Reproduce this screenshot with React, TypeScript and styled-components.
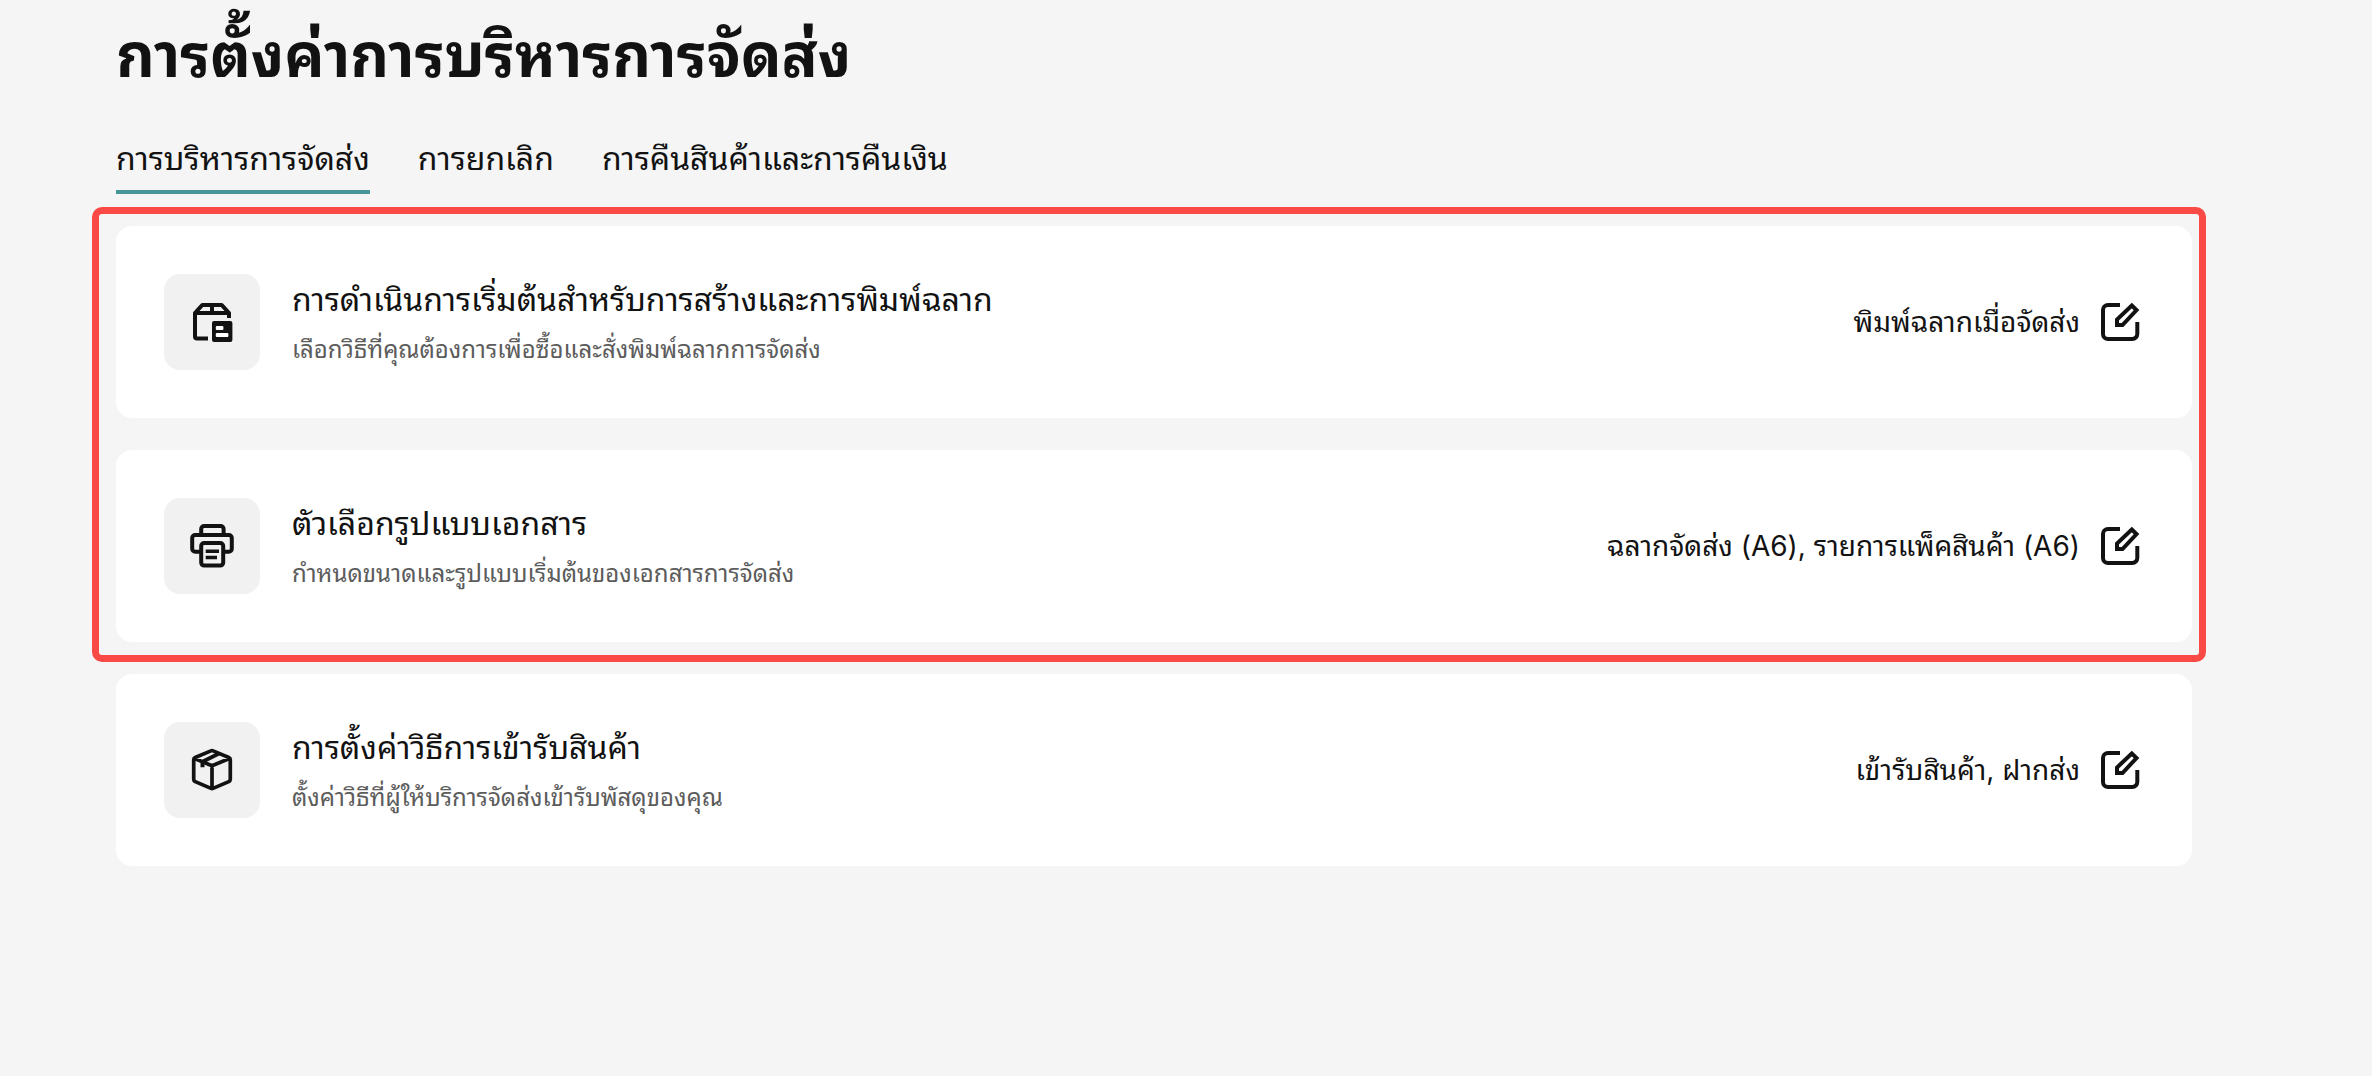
import React, { useState } from "react";
import styled, { createGlobalStyle } from "styled-components";

const GlobalStyle = createGlobalStyle`
  * { box-sizing: border-box; }
  body {
    margin: 0;
    background: #f5f5f5;
    color: #121212;
    font-family: Inter, "Noto Sans Thai Looped", "Loma", "Noto Sans Thai", "Noto Sans", sans-serif;
  }
  h1, h2, p { margin: 0; }
`;

const Page = styled.main`
  padding: 20px 180px 48px 116px;
`;

const PageTitle = styled.h1`
  font-size: 60px;
  line-height: 70px;
  font-weight: 700;
  white-space: nowrap;
`;

const Tabs = styled.nav`
  display: flex;
  gap: 48px;
  margin: 46px 0 32px;
`;

const Tab = styled.button<{ $active: boolean }>`
  padding: 0 0 8px;
  border: 0;
  border-bottom: 4px solid ${(p) => (p.$active ? "#479596" : "transparent")};
  background: none;
  color: inherit;
  font: inherit;
  font-size: 32px;
  line-height: 46px;
  white-space: nowrap;
  cursor: pointer;
`;

const CardList = styled.div`
  display: grid;
  gap: 32px;
`;

const HighlightedCards = styled(CardList)`
  position: relative;

  &::after {
    content: "";
    position: absolute;
    inset: -19px -14px -20px -24px;
    border: 7px solid #f94a45;
    border-radius: 10px;
    pointer-events: none;
  }
`;

const Card = styled.section`
  display: flex;
  align-items: center;
  gap: 32px;
  padding: 48px;
  border-radius: 16px;
  background: #fff;
`;

const IconTile = styled.div`
  display: grid;
  place-items: center;
  flex: none;
  width: 96px;
  height: 96px;
  border-radius: 16px;
  background: #f1f1f1;
`;

const CardText = styled.div`
  flex: 1;
  min-width: 0;
`;

const CardTitle = styled.h2`
  font-size: 32px;
  line-height: 48px;
  font-weight: 400;
`;

const CardDescription = styled.p`
  padding-top: 8px;
  color: #5c5c5c;
  font-size: 24px;
  line-height: 36px;
`;

const CardValue = styled.div`
  display: flex;
  align-items: center;
  gap: 16px;
  font-size: 28px;
  line-height: 40px;
  white-space: nowrap;
`;

const EditButton = styled.button`
  display: block;
  padding: 0;
  border: 0;
  background: none;
  color: inherit;
  cursor: pointer;
`;

const Glyph = styled.svg`
  display: block;
  width: 48px;
  height: 48px;
  fill: none;
  stroke: currentColor;
  stroke-width: 4;
  stroke-linejoin: round;
`;

const LabelBoxIcon = () => (
  <Glyph viewBox="0 0 48 48" aria-hidden="true">
    <path d="M20 40.5H9a2 2 0 0 1-2-2V15l6.5-7.2a2 2 0 0 1 1.5-.7h18a2 2 0 0 1 1.5.7L41 15v5M7 15h34M24 7v8" />
    <rect x="24" y="23" width="20.4" height="21" rx="2" fill="currentColor" stroke="none" />
    <rect x="27.8" y="28" width="7.6" height="4" rx="1" fill="#fff" stroke="none" />
    <rect x="27.8" y="35" width="12.6" height="4" rx="1" fill="#fff" stroke="none" />
  </Glyph>
);

const PrinterIcon = () => (
  <Glyph viewBox="0 0 48 48" aria-hidden="true">
    <path d="M13.2 12V7a3 3 0 0 1 3-3h16.4a3 3 0 0 1 3 3v5M13 29.8H7.2a3 3 0 0 1-3-3V16a3 3 0 0 1 3-3h33.6a3 3 0 0 1 3 3v10.8a3 3 0 0 1-3 3H35" />
    <rect x="13.2" y="21" width="22" height="22.6" rx="3" />
    <path d="M17.7 29.2h13.3M17.7 35.5h11.3" strokeWidth="3.6" />
  </Glyph>
);

const ParcelIcon = () => (
  <Glyph viewBox="0 0 48 48" aria-hidden="true">
    <path
      d="M22.9 4.9a2.5 2.5 0 0 1 2.2 0l15.7 6.6a2.5 2.5 0 0 1 1.5 2.3v19.5a2.5 2.5 0 0 1-1.5 2.3L25 42.4a2.5 2.5 0 0 1-2 0L7.200 35.600a2.500 2.500 0 0 1-1.500-2.300V13.800a2.500 2.500 0 0 1 1.500-2.300zM6.500 12.500L24 19.700l17.500-7.200M24 19.700v22.500"
      strokeWidth="3.7"
    />
    <path d="M14.5 21.3V15.7L31 7.5" />
  </Glyph>
);

const EditIcon = () => (
  <Glyph viewBox="0 0 48 48" aria-hidden="true">
    <path d="M24 7H12a5 5 0 0 0-5 5v24a5 5 0 0 0 5 5h24.3a5 5 0 0 0 5-5V24" />
    <path d="M35.8 7.5l4.7 4.5L26.5 27H21v-5.5z" strokeLinejoin="miter" />
  </Glyph>
);

interface Setting {
  title: string;
  description: string;
  value: string;
  icon: React.ReactNode;
}

const highlighted: Setting[] = [
  {
    title: "การดำเนินการเริ่มต้นสำหรับการสร้างและการพิมพ์ฉลาก",
    description: "เลือกวิธีที่คุณต้องการเพื่อซื้อและสั่งพิมพ์ฉลากการจัดส่ง",
    value: "พิมพ์ฉลากเมื่อจัดส่ง",
    icon: <LabelBoxIcon />,
  },
  {
    title: "ตัวเลือกรูปแบบเอกสาร",
    description: "กำหนดขนาดและรูปแบบเริ่มต้นของเอกสารการจัดส่ง",
    value: "ฉลากจัดส่ง (A6), รายการแพ็คสินค้า (A6)",
    icon: <PrinterIcon />,
  },
];

const pickup: Setting = {
  title: "การตั้งค่าวิธีการเข้ารับสินค้า",
  description: "ตั้งค่าวิธีที่ผู้ให้บริการจัดส่งเข้ารับพัสดุของคุณ",
  value: "เข้ารับสินค้า, ฝากส่ง",
  icon: <ParcelIcon />,
};

const tabs = ["การบริหารการจัดส่ง", "การยกเลิก", "การคืนสินค้าและการคืนเงิน"];

const SettingCard = ({ title, description, value, icon }: Setting) => (
  <Card>
    <IconTile>{icon}</IconTile>
    <CardText>
      <CardTitle>{title}</CardTitle>
      <CardDescription>{description}</CardDescription>
    </CardText>
    <CardValue>
      <span>{value}</span>
      <EditButton type="button" aria-label={title}>
        <EditIcon />
      </EditButton>
    </CardValue>
  </Card>
);

export default function App() {
  const [active, setActive] = useState(0);
  return (
    <>
      <GlobalStyle />
      <Page lang="th">
        <PageTitle>การตั้งค่าการบริหารการจัดส่ง</PageTitle>
        <Tabs>
          {tabs.map((label, i) => (
            <Tab key={label} type="button" $active={i === active} onClick={() => setActive(i)}>
              {label}
            </Tab>
          ))}
        </Tabs>
        <CardList>
          <HighlightedCards>
            {highlighted.map((s) => (
              <SettingCard key={s.title} {...s} />
            ))}
          </HighlightedCards>
          <SettingCard {...pickup} />
        </CardList>
      </Page>
    </>
  );
}
